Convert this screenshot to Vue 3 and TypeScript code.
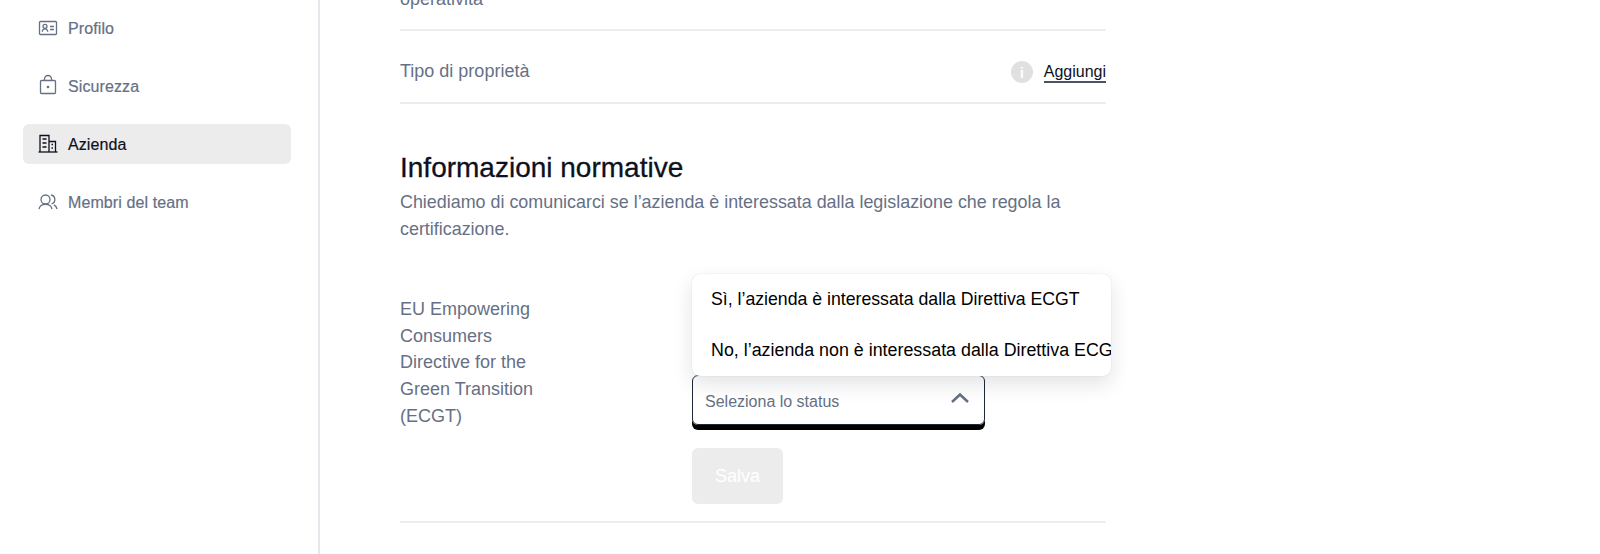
<script setup lang="ts">
const navItems: { label: string; icon: string; active?: boolean }[] = [
  { label: 'Profilo', icon: 'id' },
  { label: 'Sicurezza', icon: 'lock' },
  { label: 'Azienda', icon: 'building', active: true },
  { label: 'Membri del team', icon: 'users' },
]
const options: string[] = [
  'Sì, l’azienda è interessata dalla Direttiva ECGT',
  'No, l’azienda non è interessata dalla Direttiva ECGT',
]
</script>

<template>
  <div class="page">
    <aside class="sidebar">
      <nav class="nav">
        <a v-for="item in navItems" :key="item.label" class="nav-item" :class="{ active: item.active }">
          <svg class="nav-icon" viewBox="0 0 20 20" fill="none" stroke="currentColor" stroke-width="1.3">
            <template v-if="item.icon === 'id'">
              <rect x="1.500" y="3.500" width="17" height="13" rx="1" />
              <circle cx="7" cy="8.300" r="2" />
              <path d="M4.200 13.800c.2-2 1.300-3 2.800-3s2.600 1 2.800 3" />
              <path d="M12 8.500h4M12 11.500h4" />
            </template>
            <template v-else-if="item.icon === 'lock'">
              <rect x="2.500" y="4.500" width="15" height="13" rx="1" />
              <path d="M6.500 4.500V3a3.500 3.500 0 0 1 7 0v1.500" />
              <circle cx="10" cy="11" r=".7" fill="currentColor" />
            </template>
            <template v-else-if="item.icon === 'building'">
              <path d="M0.500 18h19" />
              <path d="M2 18V1.500h9V18M11 7.500h6.500V18" />
              <path d="M4.500 5h4M4.500 9h4M4.500 13h4M13.500 10.500h1.500M13.500 14h1.500" />
            </template>
            <template v-else>
              <circle cx="7.500" cy="7.500" r="4.500" />
              <path d="M1 17c.6-3 3-4.700 6.500-4.700s5.900 1.700 6.500 4.700" />
              <path d="M13 3a4.500 4.500 0 0 1 .5 8.800M16 12.800c1.600.8 2.600 2.200 3 4.200" />
            </template>
          </svg>
          <span class="nav-label">{{ item.label }}</span>
        </a>
      </nav>
    </aside>

    <main class="main">
      <div class="content">
        <div class="row row-clipped"><span class="muted">operatività</span></div>
        <div class="row row-owner">
          <span class="muted">Tipo di proprietà</span>
          <div class="row-action">
            <span class="info">i</span>
            <a class="add">Aggiungi</a>
          </div>
        </div>

        <section class="legal">
          <h2 class="title">Informazioni normative</h2>
          <p class="desc">Chiediamo di comunicarci se l’azienda è interessata dalla legislazione che regola la certificazione.</p>
          <div class="form-row">
            <div class="form-label">EU Empowering Consumers Directive for the Green Transition (ECGT)</div>
            <div class="form-field">
              <div class="select">
                <span class="select-text">Seleziona lo status</span>
                <svg class="chevron" viewBox="0 0 20 12" fill="none" stroke="currentColor" stroke-width="2.600">
                  <path d="M2 10l8-7.500 8 7.500" />
                </svg>
              </div>
              <ul class="menu">
                <li v-for="option in options" :key="option" class="menu-item">{{ option }}</li>
              </ul>
              <button class="save" type="button">Salva</button>
            </div>
          </div>
        </section>
      </div>
    </main>
  </div>
</template>

<style>
html, body { margin: 0; background: #fff; overflow: hidden; }
</style>

<style scoped>
.page {
  display: flex;
  height: 554px;
  overflow: hidden;
  font-family: "Liberation Sans", Arial, sans-serif;
  color: #667085;
  background: #fff;
}
.sidebar {
  flex: none;
  border-right: 2px solid #e4e7ec;
  padding: 8px 27px 0 23px;
  width: 268px;
}
.nav { display: flex; flex-direction: column; gap: 18px; }
.nav-item {
  display: flex;
  align-items: center;
  gap: 10px;
  height: 40px;
  padding: 0 15px;
  border-radius: 6px;
  font-size: 16px;
  letter-spacing: .1px;
  -webkit-text-stroke: .2px currentColor;
  color: #667085;
}
.nav-item.active { background: #ececec; color: #0c111d; }
.nav-icon { width: 20px; height: 20px; flex: none; overflow: visible; -webkit-text-stroke: 0; }
.nav-label { padding-top: 2px; }
.main { flex: 1; padding-left: 80px; }
.content { width: 706px; }
.row {
  display: flex;
  align-items: center;
  justify-content: space-between;
  border-bottom: 2px solid #eaecf0;
  font-size: 18px;
}
.row-clipped { height: 29px; align-items: flex-start; }
.row-clipped span { margin-top: -11px; line-height: 20px; }
.row-owner { box-sizing: border-box; height: 73px; padding-top: 9px; }
.muted { color: #667085; }
.row-action { display: flex; align-items: center; gap: 11px; }
.info {
  width: 22px;
  height: 22px;
  margin-top: 2px;
  border-radius: 50%;
  background: #e0e0e0;
  color: #fff;
  display: flex;
  align-items: center;
  justify-content: center;
  font-size: 15px;
  font-weight: 700;
}
.add {
  color: #0c111d;
  font-size: 16px;
  line-height: 19px;
  padding-top: 3px;
  margin-bottom: 1px;
  border-bottom: 2px solid #475467;
}
.legal { padding-top: 46px; border-bottom: 2px solid #eaecf0; padding-bottom: 17px; }
.title {
  margin: 0;
  font-size: 28px;
  line-height: 36px;
  font-weight: 500;
  -webkit-text-stroke: .3px currentColor;
  color: #0c111d;
}
.desc {
  margin: 3px 0 0;
  font-size: 17.900px;
  line-height: 27px;
}
.form-row { display: flex; margin-top: 32px; }
.form-label {
  width: 150px;
  margin-right: 142px;
  font-size: 18px;
  line-height: 26.700px;
  padding-top: 21px;
}
.form-field { position: relative; padding-top: 100px; }
.select {
  width: 293px;
  height: 50px;
  box-sizing: border-box;
  display: flex;
  align-items: center;
  justify-content: space-between;
  padding: 0 14px 0 12px;
  border: 1px solid #1d2939;
  border-radius: 6px;
  box-shadow: 0 5px 0 #000;
  margin-bottom: 5px;
  font-size: 16px;
}
.select-text { padding-top: 4px; }
.chevron { width: 20px; height: 12px; margin-bottom: 4px; color: #667085; }
.menu {
  position: absolute;
  top: -1px;
  left: 0;
  width: 419px;
  height: 102px;
  margin: 0;
  padding: 0;
  list-style: none;
  overflow: hidden;
  background: #fff;
  border-radius: 8px;
  box-shadow: 0 0 1px rgba(16, 24, 40, .2), 0 8px 20px rgba(16, 24, 40, .12);
  color: #000;
}
.menu-item {
  height: 51px;
  line-height: 51px;
  padding-left: 19px;
  white-space: nowrap;
  font-size: 17.700px;
}
.menu-item:nth-child(2) { font-size: 17.850px; }
.save {
  display: block;
  width: 91px;
  height: 56px;
  margin-top: 23px;
  border: 0;
  border-radius: 6px;
  background: #ececec;
  color: #fff;
  font: inherit;
  font-size: 18px;
}
</style>
